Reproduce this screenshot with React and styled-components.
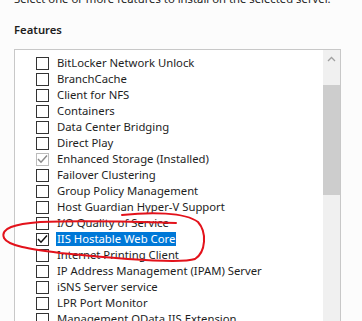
import React from "react";
import styled, { createGlobalStyle } from "styled-components";

const Global = createGlobalStyle`
  html, body { margin: 0; padding: 0; background: #ffffff; overflow: hidden; }
  body { font-family: "Noto Sans", "Liberation Sans", sans-serif; }
  #root { width: 362px; height: 321px; overflow: hidden; position: relative; }
`;

const Page = styled.div`
  width: 362px;
  height: 321px;
  overflow: hidden;
  position: relative;
  background: #fcfcfc;
`;

const Description = styled.p`
  margin: -9px 0 0 14px;
  font-size: 11.3px;
  line-height: 16px;
  color: #1e1e1e;
  white-space: nowrap;
`;

const SectionLabel = styled.h3`
  margin: 15px 0 0 14px;
  font-size: 11.3px;
  line-height: 16px;
  font-weight: 600;
  color: #1e1e1e;
`;

const ListBox = styled.div`
  margin: 11px 0 0 14px;
  width: 325px;
  height: 300px;
  border: 1px solid #c8c8c8;
  background: #ffffff;
  display: flex;
`;

const List = styled.ul`
  flex: 1;
  margin: 0;
  padding: 5px 0 0 21px;
  list-style: none;
  overflow: hidden;
`;

const Row = styled.li`
  height: 16px;
  display: flex;
  align-items: center;
  gap: 7px;
  white-space: nowrap;
`;

const Box = styled.span`
  width: 11px;
  height: 11px;
  flex: none;
  border: 1px solid ${(p) => (p.$disabled ? "#bcbcbc" : "#333333")};
  background: #ffffff;
  display: flex;
  align-items: center;
  justify-content: center;
`;

const Label = styled.span`
  font-size: 11.3px;
  line-height: 14px;
  padding: 0 1px;
  color: ${(p) => (p.$selected ? "#ffffff" : "#1e1e1e")};
  background: ${(p) => (p.$selected ? "#0078d7" : "transparent")};
`;

const ScrollBar = styled.div`
  width: 17px;
  flex: none;
  background: #f0f0f0;
  display: flex;
  flex-direction: column;
`;

const ArrowButton = styled.div`
  height: 17px;
  display: flex;
  align-items: center;
  justify-content: center;
`;

const Thumb = styled.div`
  margin-top: 18px;
  height: 110px;
  background: #cdcdcd;
`;

const Annotation = styled.svg`
  position: absolute;
  left: 0;
  top: 0;
  pointer-events: none;
`;

const items = [
  { t: "BitLocker Network Unlock" },
  { t: "BranchCache" },
  { t: "Client for NFS" },
  { t: "Containers" },
  { t: "Data Center Bridging" },
  { t: "Direct Play" },
  { t: "Enhanced Storage (Installed)", checked: true, disabled: true },
  { t: "Failover Clustering" },
  { t: "Group Policy Management" },
  { t: "Host Guardian Hyper-V Support" },
  { t: "I/O Quality of Service" },
  { t: "IIS Hostable Web Core", checked: true, selected: true },
  { t: "Internet Printing Client" },
  { t: "IP Address Management (IPAM) Server" },
  { t: "iSNS Server service" },
  { t: "LPR Port Monitor" },
  { t: "Management OData IIS Extension" },
];

function Check({ disabled }) {
  return (
    <svg width="11" height="10" viewBox="0 0 11 10">
      <path
        d="M1 5 L4 8.2 L10 1.4"
        fill="none"
        stroke={disabled ? "#8a8a8a" : "#111"}
        strokeWidth="1.5"
      />
    </svg>
  );
}

export default function App() {
  return (
    <Page>
      <Global />
      <Description>Select one or more features to install on the selected server.</Description>
      <SectionLabel>Features</SectionLabel>
      <ListBox>
        <List>
          {items.map((it) => (
            <Row key={it.t}>
              <Box $disabled={it.disabled}>{it.checked && <Check disabled={it.disabled} />}</Box>
              <Label $selected={it.selected}>{it.t}</Label>
            </Row>
          ))}
        </List>
        <ScrollBar>
          <ArrowButton>
            <svg width="9" height="6" viewBox="0 0 9 6">
              <path d="M1 5 L4.5 1.5 L8 5" fill="none" stroke="#a0a0a0" strokeWidth="1.3" />
            </svg>
          </ArrowButton>
          <Thumb />
        </ScrollBar>
      </ListBox>
      <Annotation width="362" height="321" viewBox="0 0 362 321">
        <path
          d="M122 215 C150 212, 185 212, 198 222 C207 232, 206 252, 195 259 C180 264, 120 259, 60 253 C30 249, 8 246, 4 238 C0 228, 15 224, 40 222 C90 220, 140 222, 176 223"
          fill="none"
          stroke="#e3121b"
          strokeWidth="2"
          strokeLinecap="round"
        />
      </Annotation>
    </Page>
  );
}
